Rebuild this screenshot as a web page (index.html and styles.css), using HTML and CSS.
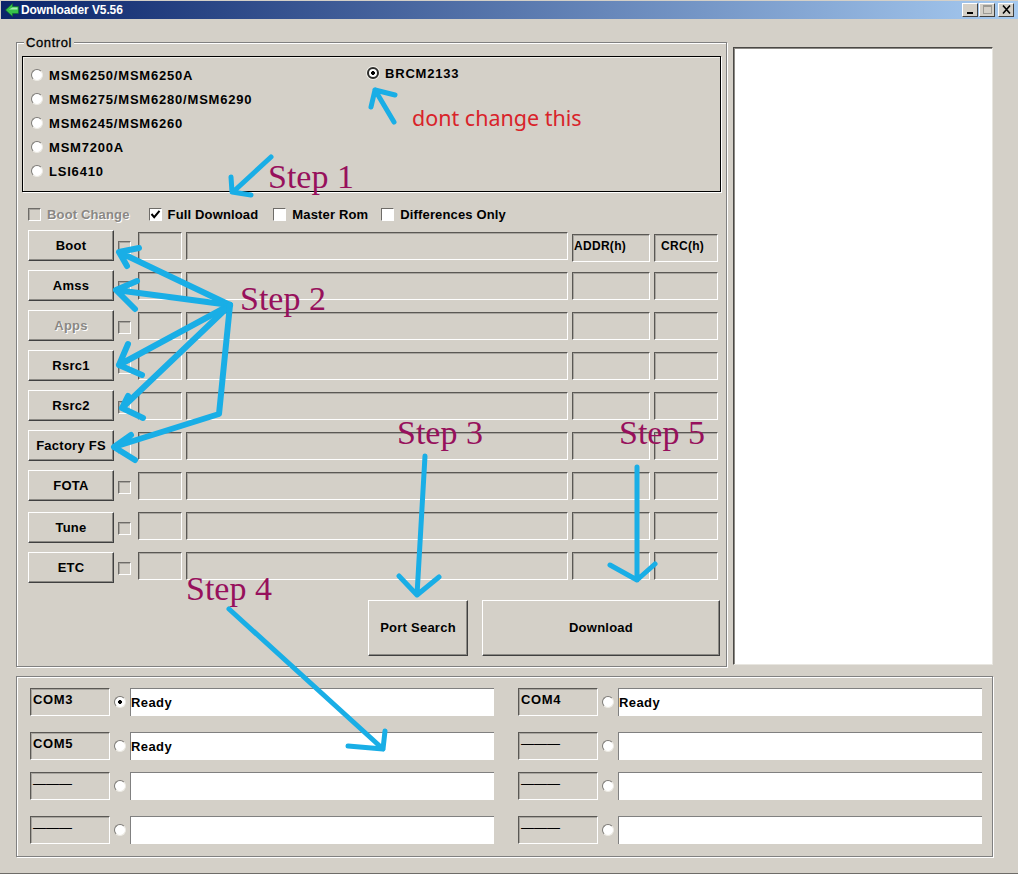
FILE: index.html
```html
<!DOCTYPE html>
<html lang="en">
<head>
    <meta charset="UTF-8">
    <title>Downloader V5.56</title>
    <link rel="stylesheet" href="styles.css">
</head>
<body>
<div class="window">
    <div class="titlebar">
        <svg class="app-icon" width="14" height="14" viewBox="0 0 14 14">
            <path d="M0.5 7 L7.5 0.5 L7.5 3.5 L13.5 3.5 L13.5 10.5 L7.5 10.5 L7.5 13.5 Z" fill="#35c24a" stroke="#0d6b2a" stroke-width="0.6"/>
            <path d="M7.5 4.5 L12.5 4.5 L12.5 6.5 L4 6.5 Z" fill="#a4eeb0"/>
        </svg>
        <span class="title-text">Downloader V5.56</span>
        <div class="caption-btns">
            <div class="cap-btn">
                <svg width="15" height="13" viewBox="0 0 15 13"><rect x="4" y="9" width="6" height="2" fill="#000"/></svg>
            </div>
            <div class="cap-btn">
                <svg width="15" height="13" viewBox="0 0 15 13"><rect x="3.5" y="2.5" width="8" height="8" fill="none" stroke="#9c9a94"/><rect x="3" y="2" width="9" height="2" fill="#9c9a94"/></svg>
            </div>
            <div class="cap-btn cap-close">
                <svg width="15" height="13" viewBox="0 0 15 13"><path d="M4 2.5 L11 10.5 M11 2.5 L4 10.5" stroke="#000" stroke-width="1.6" fill="none"/></svg>
            </div>
        </div>
    </div>

    <div class="main">
        <div class="control group">
            <span class="legend">Control</span>
            <div class="chips">
                <div class="chip-col">
                    <div class="chip"><span class="radio"></span>MSM6250/MSM6250A</div>
                    <div class="chip"><span class="radio"></span>MSM6275/MSM6280/MSM6290</div>
                    <div class="chip"><span class="radio"></span>MSM6245/MSM6260</div>
                    <div class="chip"><span class="radio"></span>MSM7200A</div>
                    <div class="chip"><span class="radio"></span>LSI6410</div>
                </div>
                <div class="chip-col chip-col2">
                    <div class="chip"><span class="radio on focus"></span>BRCM2133</div>
                </div>
            </div>

            <div class="options">
                <div class="opt opt-boot disabled"><span class="check"></span>Boot Change</div>
                <div class="opt opt-full"><span class="check white"><svg width="11" height="11" viewBox="0 0 11 11"><path d="M1.5 5 L4.2 8.2 L9.5 1.8" fill="none" stroke="#000" stroke-width="2"/></svg></span>Full Download</div>
                <div class="opt opt-master"><span class="check white"></span>Master Rom</div>
                <div class="opt"><span class="check white"></span>Differences Only</div>
            </div>

            <div class="rows">
                <div class="row">
                    <div class="btn">Boot</div><span class="check"></span>
                    <div class="field small"></div><div class="field wide"></div>
                    <div class="field addr head">ADDR(h)</div><div class="field crc head">CRC(h)</div>
                </div>
                <div class="row">
                    <div class="btn">Amss</div><span class="check"></span>
                    <div class="field small"></div><div class="field wide"></div>
                    <div class="field addr"></div><div class="field crc"></div>
                </div>
                <div class="row">
                    <div class="btn disabled">Apps</div><span class="check"></span>
                    <div class="field small"></div><div class="field wide"></div>
                    <div class="field addr"></div><div class="field crc"></div>
                </div>
                <div class="row">
                    <div class="btn">Rsrc1</div><span class="check"></span>
                    <div class="field small"></div><div class="field wide"></div>
                    <div class="field addr"></div><div class="field crc"></div>
                </div>
                <div class="row">
                    <div class="btn">Rsrc2</div><span class="check"></span>
                    <div class="field small"></div><div class="field wide"></div>
                    <div class="field addr"></div><div class="field crc"></div>
                </div>
                <div class="row">
                    <div class="btn">Factory FS</div><span class="check"></span>
                    <div class="field small"></div><div class="field wide"></div>
                    <div class="field addr"></div><div class="field crc"></div>
                </div>
                <div class="row row-long">
                    <div class="btn">FOTA</div><span class="check"></span>
                    <div class="field small"></div><div class="field wide"></div>
                    <div class="field addr"></div><div class="field crc"></div>
                </div>
                <div class="row flush">
                    <div class="btn">Tune</div><span class="check"></span>
                    <div class="field small"></div><div class="field wide"></div>
                    <div class="field addr"></div><div class="field crc"></div>
                </div>
                <div class="row flush">
                    <div class="btn">ETC</div><span class="check"></span>
                    <div class="field small"></div><div class="field wide"></div>
                    <div class="field addr"></div><div class="field crc"></div>
                </div>
            </div>

            <div class="actions">
                <div class="btn port">Port Search</div>
                <div class="btn download">Download</div>
            </div>
        </div>

        <div class="log"></div>
    </div>

    <div class="ports group">
        <div class="port-item"><div class="field com">COM3</div><span class="radio on"></span><div class="status">Ready</div></div>
        <div class="port-item"><div class="field com">COM4</div><span class="radio"></span><div class="status">Ready</div></div>
        <div class="port-item"><div class="field com">COM5</div><span class="radio"></span><div class="status">Ready</div></div>
        <div class="port-item"><div class="field com dash">———</div><span class="radio"></span><div class="status"></div></div>
        <div class="port-item"><div class="field com dash">———</div><span class="radio"></span><div class="status"></div></div>
        <div class="port-item"><div class="field com dash">———</div><span class="radio"></span><div class="status"></div></div>
        <div class="port-item"><div class="field com dash">———</div><span class="radio"></span><div class="status"></div></div>
        <div class="port-item"><div class="field com dash">———</div><span class="radio"></span><div class="status"></div></div>
    </div>

    <!-- hand drawn notes on top of the screenshot -->
    <svg class="notes" width="1018" height="874" viewBox="0 0 1018 874">
        <g class="arrows">
            <path d="M271 157 L233 192 M231 177 L232 192 L251 195"/>
            <path d="M394 122 L375 90 M371 107 L375 90 L395 95"/>
            <path class="bold" d="M230 305 L119 252 M139 248 L119 252 L127 266"/>
            <path class="bold" d="M230 305 L116 290 M137 281 L116 290 L135 309"/>
            <path class="bold" d="M230 305 L119 365 M128 344 L119 365 L142 375"/>
            <path class="bold" d="M230 305 L122 408 M128 396 L122 408 L143 418"/>
            <path class="bold" d="M230 305 L219 414 L114 447 M131 435 L114 447 L135 460"/>
            <path d="M425 456 L417 595 M399 576 L417 595 L439 577"/>
            <path d="M637 467 L637 580 M610 565 L637 580 L655 564"/>
            <path d="M229 609 L383 749 M385 731 L383 749 L348 746"/>
        </g>
        <text class="step" x="268" y="188">Step 1</text>
        <text class="step" x="240" y="310">Step 2</text>
        <text class="step" x="397" y="444">Step 3</text>
        <text class="step" x="186" y="600">Step 4</text>
        <text class="step" x="619" y="444">Step 5</text>
        <text class="warn" x="412" y="126">dont change this</text>
    </svg>
</div>
</body>
</html>
```

FILE: styles.css
```css
*{
    margin: 0;
    padding: 0;
    box-sizing: border-box;
}
body{
    background-color: #d4d0c8;
}
.window{
    position: relative;
    width: 1018px;
    height: 874px;
    overflow: hidden;
    background-color: #d4d0c8;
    border-bottom: 1px solid #6e6c68;
    font-family: "Liberation Sans", Arial, sans-serif;
    font-size: 13px;
    font-weight: bold;
    letter-spacing: 0.15px;
    color: #000;
}
.titlebar{
    display: flex;
    align-items: center;
    height: 18px;
    margin-left: 1px;
    margin-top: 1px;
    padding-left: 4px;
    background: linear-gradient(to right, #0a246a, #a6caf0);
    color: #fff;
}
.app-icon{
    flex: none;
}
.title-text{
    margin-left: 2px;
    font-size: 12px;
    letter-spacing: -0.1px;
}
.caption-btns{
    display: flex;
    margin-left: auto;
    margin-right: 4px;
    gap: 1px;
}
.cap-btn{
    width: 16px;
    height: 14px;
    background-color: #d4d0c8;
    border: 1px solid;
    border-color: #fff #404040 #404040 #fff;
}
.cap-btn svg{
    display: block;
    margin-top: -1px;
}
.cap-close{
    margin-left: 2px;
}
.group{
    border: 1px solid #808080;
    box-shadow: inset 1px 1px 0 #fff, 1px 1px 0 #fff;
}
.main{
    display: flex;
    margin: 23px 0 0 16px;
}
.control{
    position: relative;
    width: 711px;
    height: 625px;
    padding: 13px 6px 0 5px;
}
.legend{
    position: absolute;
    left: 7px;
    top: -8px;
    padding: 0 2px;
    background-color: #d4d0c8;
    font-weight: normal;
    letter-spacing: 0.6px;
    -webkit-text-stroke: 0.3px #000;
}
.chips{
    display: flex;
    width: 699px;
    height: 136px;
    padding: 6px 0 0 8px;
    border: 1px solid #000;
    box-shadow: 1px 1px 0 #fff, inset 1px 1px 0 #f2f0ea;
    letter-spacing: 0.8px;
}
.chip-col{
    width: 336px;
}
.chip-col2{
    margin-top: -2px;
}
.chip{
    display: flex;
    align-items: center;
    gap: 6px;
    height: 24px;
}
.radio{
    flex: none;
    display: block;
    width: 12px;
    height: 12px;
    background-color: #fff;
    border: 1px solid;
    border-color: #7c7a76 #eceae4 #eceae4 #7c7a76;
    border-radius: 50%;
}
.radio.on{
    background: radial-gradient(circle, #000 0, #000 1.6px, #fff 2.2px);
}
.radio.focus{
    border: 2px solid #2e2e2c;
    box-shadow: 0 0 0 1px #f0eee8;
}
.options{
    display: flex;
    align-items: center;
    height: 16px;
    margin: 14px 0 0 6px;
}
.opt{
    display: flex;
    align-items: center;
    gap: 6px;
    margin-right: 13px;
}
.opt-boot{
    margin-right: 19px;
}
.opt-full{
    margin-right: 15px;
}
.disabled{
    color: #8a8884;
    text-shadow: 1px 1px 0 #fff;
}
.check{
    flex: none;
    display: block;
    width: 13px;
    height: 13px;
    border: 1px solid;
    border-color: #6e6c68 #fff #fff #6e6c68;
    box-shadow: inset 1px 1px 0 #a8a59f;
}
.check.white{
    background-color: #fff;
    box-shadow: none;
}
.check svg{
    display: block;
}
.rows{
    margin: 8px 0 0 6px;
}
.row{
    display: flex;
    align-items: flex-start;
    height: 40px;
}
.row-long{
    height: 42px;
}
.row .check{
    margin: 11px 7px 0 4px;
}
.row.flush .check{
    margin-top: 10px;
}
.field{
    flex: none;
    height: 28px;
    border: 1px solid;
    border-color: #5a5854 #fff #fff #5a5854;
    box-shadow: inset 1px 1px 0 #a8a59f;
}
.row .field{
    margin-top: 2px;
    margin-right: 4px;
}
.row.flush .field{
    margin-top: 0;
}
.small{
    width: 44px;
}
.wide{
    width: 382px;
}
.addr{
    width: 78px;
}
.crc{
    width: 64px;
}
.row .head{
    margin-top: 4px;
    padding-top: 4px;
    font-size: 12px;
    letter-spacing: 0.3px;
}
.addr.head{
    padding-left: 1px;
}
.crc.head{
    padding-left: 6px;
}
.btn{
    display: flex;
    align-items: center;
    justify-content: center;
    flex: none;
    width: 86px;
    height: 31px;
    letter-spacing: 0.25px;
    border: 1px solid;
    border-color: #fff #404040 #404040 #fff;
    box-shadow: inset -1px -1px 0 #8c8a85;
}
.actions{
    display: flex;
    justify-content: flex-end;
    gap: 14px;
    margin-top: 8px;
}
.actions .btn{
    height: 56px;
    padding-bottom: 2px;
}
.port{
    width: 100px;
}
.download{
    width: 238px;
}
.log{
    width: 260px;
    height: 618px;
    margin: 5px 0 0 6px;
    background-color: #fff;
    border: 1px solid;
    border-color: #4a4845 #e8e6e0 #e8e6e0 #4a4845;
    box-shadow: inset 1px 1px 0 #8c8a85;
}
.ports{
    display: grid;
    grid-template-columns: 464px 464px;
    grid-template-rows: 44px 40px 44px 40px;
    column-gap: 24px;
    width: 977px;
    height: 181px;
    margin: 9px 0 0 16px;
    padding: 11px 0 0 13px;
}
.port-item{
    display: flex;
    align-items: flex-start;
}
.port-item .radio{
    margin: 8px 4px 0 4px;
}
.com{
    width: 80px;
    padding: 3px 0 0 2px;
    line-height: 15px;
    letter-spacing: 0.6px;
}
.dash{
    letter-spacing: 0;
    font-weight: normal;
}
.status{
    flex: 1;
    height: 28px;
    padding-top: 6px;
    line-height: 16px;
    letter-spacing: 0.4px;
    background-color: #fff;
    border-top: 1px solid #808080;
    border-left: 1px solid #808080;
}
.notes{
    position: absolute;
    left: 0;
    top: 0;
}
.arrows path{
    fill: none;
    stroke: #19aee6;
    stroke-width: 5;
    stroke-linecap: round;
    stroke-linejoin: round;
}
.arrows path.bold{
    stroke-width: 6;
}
.step{
    font-family: "Liberation Serif", "Times New Roman", serif;
    font-size: 34px;
    font-weight: normal;
    letter-spacing: 0;
    fill: #97105c;
}
.warn{
    font-family: "Noto Sans", Arial, sans-serif;
    font-size: 21.5px;
    font-weight: normal;
    letter-spacing: 0;
    fill: #d9232a;
}
```
